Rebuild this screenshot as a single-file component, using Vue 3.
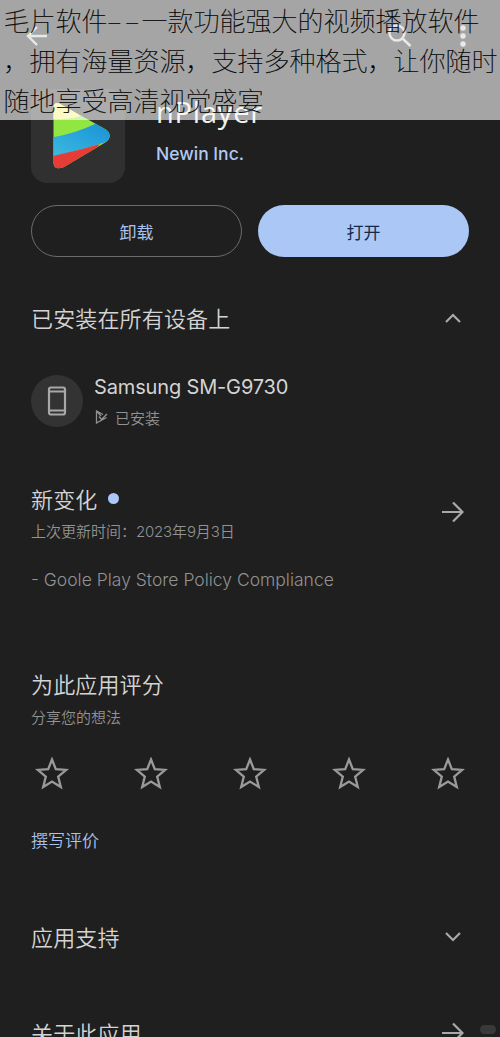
<script setup>
const stars = [1, 2, 3, 4, 5]
const captionTail = ['，拥有海量资源，支持多种格式，让你随时', '随地享受高清视觉盛宴']
</script>

<template>
  <main class="screen">
    <nav class="toolbar">
      <svg class="back" width="22" height="20" viewBox="0 0 22 20"><path d="M21 10H2M11 1L2 10l9 9" /></svg>
      <svg class="search" width="24" height="24" viewBox="0 0 24 24"><circle cx="9" cy="9" r="7.5" /><path d="M14.5 14.5L22.5 22" /></svg>
      <svg class="dots" width="6" height="22" viewBox="0 0 6 22"><circle cx="3" cy="3" r="2.7" /><circle cx="3" cy="11" r="2.7" /><circle cx="3" cy="19" r="2.7" /></svg>
    </nav>

    <header class="app">
      <div class="logo">
        <svg width="94" height="94" viewBox="0 0 94 94">
          <defs>
            <clipPath id="play"><path d="M22.500 19C22.500 13 27 13 31 16L74 40Q83 46 75 53L33 78Q23 82 22.500 74Z" /></clipPath>
            <linearGradient id="sky" x1="0" y1="1" x2="1" y2="0"><stop offset="0" stop-color="#3dbbe0" /><stop offset="1" stop-color="#168dd5" /></linearGradient>
          </defs>
          <g clip-path="url(#play)">
            <path d="M20 10H84V84H20Z" fill="#91e642" />
            <path d="M20 8L50 27Q36 31 20 30Z" fill="#fff06a" />
            <path d="M20 48.500Q43 45 64 35L84 30V50Q51 61 20 68Z" fill="url(#sky)" />
            <path d="M20 67.500Q46 62 69 55L45 84H20Z" fill="#e63b36" />
          </g>
        </svg>
      </div>
      <div class="title">
        <h1>nPlayer</h1>
        <p>Newin Inc.</p>
      </div>
    </header>

    <div class="actions">
      <button class="outline">卸载</button>
      <button class="filled">打开</button>
    </div>

    <section class="devices">
      <div class="head">
        <h2>已安装在所有设备上</h2>
        <svg class="chev" width="16" height="10" viewBox="0 0 16 10"><path d="M1 9l7-7 7 7" /></svg>
      </div>
      <div class="device">
        <div class="disc">
          <svg width="20" height="30" viewBox="0 0 20 30"><rect x="2" y="1.500" width="16" height="27" rx="2" /><path d="M2 5.500h16M2 24.500h16" /></svg>
        </div>
        <div>
          <div class="model">Samsung SM-G9730</div>
          <div class="installed">
            <svg width="13" height="14" viewBox="0 0 13 14"><path d="M8 4.500L1.500 1V13L11.500 7.500M1.500 1L6 6M4 6.500l2.500 3L12 4" /></svg>
            <span>已安装</span>
          </div>
        </div>
      </div>
    </section>

    <section class="news">
      <div class="head">
        <div>
          <div class="newline"><h2>新变化</h2><i></i></div>
          <p class="sub">上次更新时间：<span>2023</span>年<span>9</span>月<span>3</span>日</p>
        </div>
        <svg class="arrow" width="22" height="22" viewBox="0 0 22 22"><path d="M0 11h20M11 1.500L20.500 11 11 20.500" /></svg>
      </div>
      <p class="note">- Goole Play Store Policy Compliance</p>
    </section>

    <section class="rate">
      <h2>为此应用评分</h2>
      <p class="sub">分享您的想法</p>
      <div class="stars">
        <svg v-for="s in stars" :key="s" width="34" height="34" viewBox="0 0 34 34"><path d="M17 2.500L20.800 12.200 31.200 12.900 23.200 19.600 25.800 30 17 24.500 8.200 30 10.800 19.600 2.800 12.900 13.200 12.200Z" /></svg>
      </div>
      <a>撰写评价</a>
    </section>

    <section class="head support">
      <h2>应用支持</h2>
      <svg class="chev" width="16" height="10" viewBox="0 0 16 10"><path d="M1 1l7 7 7-7" /></svg>
    </section>
    <section class="head about">
      <h2>关于此应用</h2>
      <svg class="arrow" width="22" height="22" viewBox="0 0 22 22"><path d="M0 11h20M11 1.500L20.500 11 11 20.500" /></svg>
    </section>

    <div class="caption">
      <div>毛片软件<span class="dash">––</span>一款功能强大的视频播放软件</div>
      <div v-for="line in captionTail" :key="line">{{ line }}</div>
    </div>
    <div class="mark"></div>
  </main>
</template>

<style>
body { background: #1f1f1f; overflow: hidden; }
</style>

<style scoped>
.screen {
  position: relative;
  box-sizing: border-box;
  height: 1037px;
  overflow: hidden;
  padding: 0 31px;
  background: #1f1f1f;
  color: #d4d4d4;
  font-family: Inter, "Noto Sans CJK SC", sans-serif;
}
h1, h2, p { margin: 0; font-weight: 400; }
svg { display: block; flex: none; fill: none; stroke: #a8a8a8; stroke-width: 2.200; }
.toolbar { display: flex; align-items: center; height: 72px; margin: 0 1px 0 -5px; }
.back, .search { stroke: #c8c8c8; stroke-width: 2.4; }
.search { margin-left: auto; margin-right: 48px; }
.dots { fill: #c8c8c8; stroke: none; margin-right: 2px; }
.app { display: flex; height: 111px; padding-top: 17px; box-sizing: border-box; }
.logo { width: 94px; height: 94px; border-radius: 16px; background: #303030; }
.logo svg { stroke: none; }
.title { margin-left: 31px; }
h1 { height: 48px; line-height: 46px; font-family: "Open Sans", sans-serif; font-size: 29px; font-weight: 500; letter-spacing: .8px; color: #eee; }
.title p { height: 34px; line-height: 34px; font-size: 17.500px; font-weight: 500; color: #b1c9f3; }
.actions { display: grid; grid-template-columns: 211px 211px; gap: 16px; margin-top: 22px; }
button { box-sizing: border-box; height: 52px; border-radius: 26px; padding: 0; font: 400 17px "Noto Sans CJK SC", sans-serif; }
.outline { border: 1.500px solid #6b6b6b; background: none; color: #a9c2ef; }
.filled { border: 0; background: #abc7f5; color: #14294c; }
h2 { font: 350 22px/32px "Noto Sans CJK SC", sans-serif; letter-spacing: .15px; }
.head { display: flex; align-items: center; justify-content: space-between; }
.chev { margin-right: 8px; }
.arrow { margin-right: 5px; }
.devices { margin-top: 44px; }
.devices .chev { margin-top: 2px; }
.device { display: flex; margin-top: 42px; }
.disc { display: grid; place-items: center; width: 52px; height: 52px; margin-right: 11px; border-radius: 50%; background: #333; }
.model { height: 26px; line-height: 24px; font-size: 20px; letter-spacing: -.15px; }
.installed { display: flex; align-items: center; gap: 7px; height: 32px; padding-left: 1px; font: 350 15px "Noto Sans CJK SC", sans-serif; color: #929292; }
.installed svg { stroke: #929292; stroke-width: 1.300; }
.news { margin-top: 49px; }
.news .head .arrow { margin-bottom: 6px; }
.newline { display: flex; align-items: center; height: 32px; }
.newline i { width: 11px; height: 11px; margin-left: 11px; border-radius: 50%; background: #abc7f5; }
.sub { height: 34px; font: 350 15px/34px "Noto Sans CJK SC", sans-serif; color: #929292; }
.sub span { font-family: Inter, sans-serif; letter-spacing: -.2px; }
.note { margin-top: 15px; height: 34px; line-height: 34px; font-size: 17.500px; font-weight: 350; color: #929292; }
.rate { margin-top: 70px; }
.rate .sub { margin-top: 1px; }
.stars { display: flex; justify-content: space-between; margin: 23px 4px 0 4px; }
.stars svg { stroke: #9a9a9a; stroke-width: 2.300; }
.rate a { display: block; margin-top: 33px; font: 350 17px/32px "Noto Sans CJK SC", sans-serif; color: #a9c2ef; }
.support { margin-top: 64px; }
.support .chev { margin-top: 2px; }
.about { margin-top: 64px; }
.about .arrow { margin-top: 2px; }
.caption {
  position: absolute;
  inset: 0 0 auto;
  height: 120px;
  padding-left: 3.500px;
  background: rgba(255, 255, 255, .6);
  color: #000;
  font: 100 26px/40px "Noto Sans CJK SC", sans-serif;
  -webkit-text-stroke: .2px #000;
  white-space: nowrap;
}
.dash { display: inline-block; width: 34px; letter-spacing: 4px; }
.mark { position: absolute; right: 4px; bottom: 3px; width: 16px; height: 9px; border-radius: 5px; background: #393939; }
</style>
